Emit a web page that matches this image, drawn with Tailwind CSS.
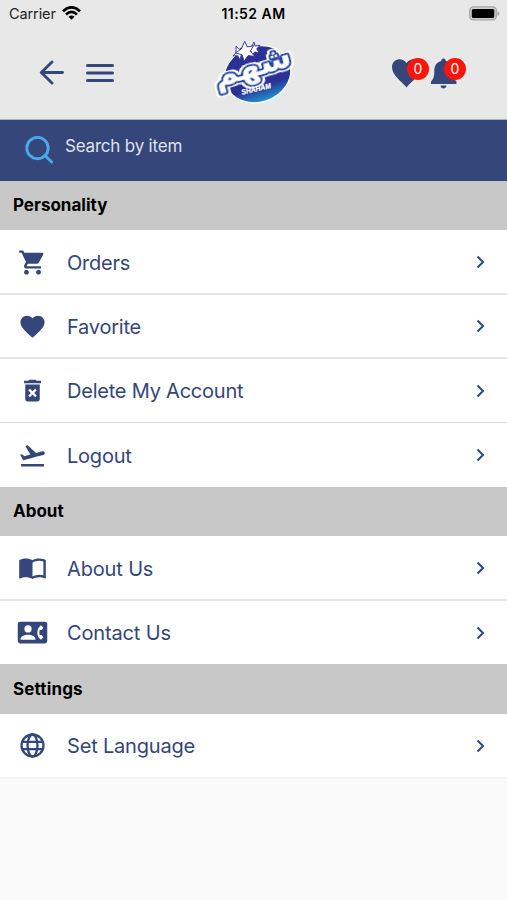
<!DOCTYPE html>
<html lang="en">
<head>
<meta charset="utf-8">
<title>Shaham</title>
<script src="https://cdn.jsdelivr.net/npm/@tailwindcss/browser@4"></script>
</head>
<body class="w-[507px] h-[900px] overflow-hidden bg-[#fafafa] font-['Inter','Liberation_Sans',sans-serif] text-[#34467a]">
<header class="h-[120px] bg-[#e8e8e8] border-b border-[#a9aec0]">
  <div class="h-[28px] grid grid-cols-3 items-center pl-[9px] pr-[7px] text-[#222]">
    <div class="flex items-center gap-[6px] text-[14.5px] tracking-[-0.1px]"><span>Carrier</span>
      <svg class="w-[19px] h-[14px] -mt-[2px]" viewBox="0 0 19 14" fill="none" stroke="#000" stroke-width="2.7"><path d="M1 5.2Q9.500-2.600 18 5.200M4 8.400Q9.500 3.500 15 8.400"/><path d="M6.500 10.700Q9.500 8.200 12.500 10.700L9.500 13.700Z" fill="#000" stroke="none"/></svg>
    </div>
    <div class="text-center -mt-px pr-[2px] text-[14px] tracking-[0.45px] font-semibold text-black whitespace-nowrap">11:52 AM</div>
    <svg class="w-[31px] h-[15px] justify-self-end -mt-[2px]" viewBox="0 0 31 15"><rect x=".8" y=".9" width="26.500" height="13" rx="3.500" fill="#d0d0d0" stroke="#a5a5a5" stroke-width="1.300"/><rect x="2.800" y="2.900" width="22.500" height="9" rx="1.500"/><path d="M28.500 5q2 1 2 2.500t-2 2.500z" fill="#a5a5a5"/></svg>
  </div>
  <div class="h-[89px] flex items-center pl-[39px]">
    <div class="w-[161px] flex items-center gap-[22px]">
      <svg class="w-[25px] h-[25px]" viewBox="0 0 25 25" fill="none" stroke="#34467a" stroke-width="2.900" stroke-linecap="round" stroke-linejoin="round"><path d="M13 2L2.300 12.500L13 23M2.500 12.500H23.500"/></svg>
      <svg class="w-[28px] h-[20px]" viewBox="0 0 28 20" fill="none" stroke="#34467a" stroke-width="3" stroke-linecap="round"><path d="M1.500 2.500H26.500M1.500 10H26.500M1.500 17.500H26.500"/></svg>
    </div>
    <svg class="w-[110px] h-[85px] shrink-0 overflow-visible" viewBox="0 0 330 255">
      <defs>
        <linearGradient id="ball" x1="0" y1="0" x2="0" y2="1"><stop offset=".72" stop-color="#2b2f96"/><stop offset="1" stop-color="#2196cf"/></linearGradient>
        <filter id="rim" x="-.2" y="-.3" width="1.400" height="1.600"><feMorphology in="SourceAlpha" operator="dilate" radius="4"/><feGaussianBlur stdDeviation=".8" result="d"/><feFlood flood-color="#fff"/><feComposite in2="d" operator="in" result="w"/><feMerge><feMergeNode in="w"/><feMergeNode in="w"/><feMergeNode in="SourceGraphic"/></feMerge></filter>
      </defs>
      <g transform="rotate(-18 174 130)"><ellipse cx="172" cy="132" rx="101" ry="84" fill="url(#ball)" stroke="#f5fafc" stroke-width="4"/></g>
      <g fill="#fff" stroke="#3439a0" stroke-width="3">
        <path d="M108 49l10 9 11-7-2 13 12 8-15 3-4 14-7-12-14 1 9-10z"/>
        <path d="M162 36l3 12 15-2-10 11 8 11-14-2-8 11-3-14-13-6 14-5z"/>
        <path d="M134 34l8 17 19-4-10 16 13 16-20-2-12 17-6-20-20-5 18-12z"/>
      </g>
      <g transform="translate(165 139) rotate(-16) scale(1.300 1)" filter="url(#rim)">
        <text text-anchor="middle" font-family="DejaVu Sans, sans-serif" font-weight="700" font-size="92" textLength="184" lengthAdjust="spacingAndGlyphs" fill="#fff" stroke="#1f4aa2" stroke-width="13" stroke-linejoin="round" paint-order="stroke">شهم</text>
      </g>
      <text transform="translate(126 194) rotate(-13)" font-family="Liberation Sans, sans-serif" font-size="22" font-weight="700" font-style="italic" fill="#fff" stroke="#fff" stroke-width=".8" textLength="90" lengthAdjust="spacingAndGlyphs">SHAHAM</text>
    </svg>
    <div class="ml-[81px] w-[77px] flex items-center">
      <div class="relative w-[39px] h-[34px]">
        <svg class="w-[31px] h-[34px]" viewBox="0 0 31 34" fill="#34467a"><path d="M15.500 31.500C11 26 1 19 1 11.500C1 2.500 11 .8 15.500 7C20 .8 30 2.500 30 11.500C30 19 20 26 15.500 31.500Z"/></svg>
        <span class="absolute left-[16px] top-[2px] size-[22px] rounded-full bg-[#fb140a] text-white text-[14px] flex items-center justify-center">0</span>
      </div>
      <div class="relative w-[38px] h-[34px]">
        <svg class="w-[27px] h-[34px]" viewBox="0 0 27 34" fill="#34467a"><path d="M13.500 2.500c1.600 0 2.200 1.200 2.200 2.600 4.700 1 7.300 4.500 7.300 10 0 7 1.500 8.500 3.500 10.400v2.500H1v-2.500c2-1.900 3.300-3.400 3.300-10.400 0-5.500 2.500-9 7-10 0-1.400.6-2.600 2.200-2.600zM10.500 29.500h6q-.5 3-3 3t-3-3z"/></svg>
        <span class="absolute left-[14px] top-[2px] size-[22px] rounded-full bg-[#fb140a] text-white text-[14px] flex items-center justify-center">0</span>
      </div>
    </div>
  </div>
</header>
<div class="h-[61px] bg-[#34467a] flex items-start pl-[25px] gap-[12px] text-[#dfe2ec]">
  <svg class="w-[28px] h-[28px] mt-[16px]" viewBox="0 0 28 28" fill="none" stroke="#4aa9e9" stroke-width="2.900" stroke-linecap="round"><circle cx="12.500" cy="12" r="10.700"/><path d="M20 19.500L26.500 26"/></svg>
  <span class="mt-[14px] text-[17px] leading-[24px] tracking-[-0.2px]">Search by item</span>
</div>
<h2 class="h-[49px] bg-[#c8c8c8] flex items-center pl-[13px] pt-px text-[17px] font-bold text-black"><span>Personality</span></h2>
<ul class="bg-white text-[20px] tracking-[-0.22px]">
  <li class="h-[64.500px] border-b-2 border-[#e4e4e4] flex items-center pt-[2px] pl-[18px] pr-[17px]"><svg class="size-[29px]" viewBox="0 0 24 24" fill="#34467a"><path d="M7 18c-1.100 0-1.990.9-1.990 2S5.900 22 7 22s2-.9 2-2-.9-2-2-2zM1 2v2h2l3.600 7.590-1.350 2.450c-.16.28-.25.61-.25.96 0 1.100.9 2 2 2h12v-2H7.420c-.14 0-.25-.11-.25-.25l.03-.12.9-1.630h7.450c.75 0 1.410-.41 1.750-1.030l3.580-6.490A1 1 0 0020 4H5.210l-.94-2H1zm16 16c-1.100 0-1.990.9-1.990 2s.89 2 1.990 2 2-.9 2-2-.9-2-2-2z"/></svg><span class="ml-[20px] pt-px flex-1">Orders</span><svg class="size-[20px]" viewBox="0 0 20 20" fill="none" stroke="#34467a" stroke-width="2"><path d="M7.500 4.500L13 10L7.500 15.500"/></svg></li>
  <li class="h-[64.500px] border-b-2 border-[#e4e4e4] flex items-center pt-[1px] pl-[18px] pr-[17px]"><svg class="size-[29px]" viewBox="0 0 24 24" fill="#34467a"><path d="M12 21.350l-1.450-1.320C5.400 15.360 2 12.280 2 8.500 2 5.420 4.420 3 7.500 3c1.740 0 3.410.81 4.500 2.090C13.090 3.810 14.760 3 16.500 3 19.580 3 22 5.420 22 8.500c0 3.780-3.400 6.860-8.550 11.540L12 21.350z"/></svg><span class="ml-[20px] pt-px flex-1">Favorite</span><svg class="size-[20px]" viewBox="0 0 20 20" fill="none" stroke="#34467a" stroke-width="2"><path d="M7.500 4.500L13 10L7.500 15.500"/></svg></li>
  <li class="h-[64px] border-b border-[#d4d4d4] flex items-center pl-[18px] pr-[17px]"><svg class="size-[29px]" viewBox="0 0 24 24" fill="#34467a"><path d="M6 19c0 1.100.9 2 2 2h8c1.100 0 2-.9 2-2V7H6v12zm2.460-7.120l1.410-1.410L12 12.590l2.120-2.120 1.410 1.410L13.410 14l2.120 2.120-1.410 1.410L12 15.410l-2.120 2.120-1.410-1.410L10.590 14l-2.130-2.120zM15.500 4l-1-1h-5l-1 1H5v2h14V4z"/></svg><span class="ml-[20px] pt-px flex-1">Delete My Account</span><svg class="size-[20px]" viewBox="0 0 20 20" fill="none" stroke="#34467a" stroke-width="2"><path d="M7.500 4.500L13 10L7.500 15.500"/></svg></li>
  <li class="h-[64px] flex items-center pl-[18px] pr-[17px]"><svg class="size-[29px]" viewBox="0 0 24 24" fill="#34467a"><path d="M2.500 19h19v2h-19zm19.570-9.360c-.21-.8-1.040-1.280-1.840-1.060L14.920 10l-6.900-6.430-1.930.51 4.140 7.170-4.970 1.330-1.970-1.540-1.450.39 1.820 3.160.77 1.330 1.600-.43 5.310-1.420 4.350-1.160L21 11.490c.81-.23 1.280-1.050 1.070-1.850z"/></svg><span class="ml-[20px] pt-px flex-1">Logout</span><svg class="size-[20px]" viewBox="0 0 20 20" fill="none" stroke="#34467a" stroke-width="2"><path d="M7.500 4.500L13 10L7.500 15.500"/></svg></li>
</ul>
<h2 class="h-[49px] bg-[#c8c8c8] flex items-center pl-[13px] pt-px text-[17px] font-bold text-black"><span>About</span></h2>
<ul class="bg-white text-[20px] tracking-[-0.15px]">
  <li class="h-[65px] border-b-2 border-[#e4e4e4] flex items-center pl-[18px] pr-[17px]"><svg class="size-[29px]" viewBox="0 0 24 24" fill="#34467a"><path d="M21 5c-1.110-.35-2.330-.5-3.500-.5-1.950 0-4.050.4-5.500 1.500-1.450-1.100-3.550-1.500-5.500-1.500S2.450 4.900 1 6v14.650c0 .25.250.5.500.5.100 0 .150-.05.250-.05C3.100 20.450 5.050 20 6.500 20c1.950 0 4.050.4 5.500 1.500 1.350-.85 3.800-1.500 5.500-1.500 1.650 0 3.350.3 4.750 1.050.1.050.150.050.250.050.250 0 .5-.250.5-.5V6c-.6-.450-1.250-.750-2-1zm0 13.500c-1.100-.350-2.300-.5-3.500-.5-1.700 0-4.150.650-5.500 1.500V8c1.350-.850 3.800-1.500 5.500-1.500 1.200 0 2.400.150 3.500.5v11.500z"/></svg><span class="ml-[20px] pt-[2px] flex-1">About Us</span><svg class="size-[20px]" viewBox="0 0 20 20" fill="none" stroke="#34467a" stroke-width="2"><path d="M7.500 4.500L13 10L7.500 15.500"/></svg></li>
  <li class="h-[63px] flex items-center pl-[18px] pr-[17px]"><svg class="size-[29px] overflow-visible" viewBox="0 0 24 24"><rect x="-.2" y="3" width="24.400" height="18" rx="2" fill="#34467a"/><g fill="#fff"><circle cx="8.300" cy="9" r="3"/><path d="M2.200 18v-1c0-2 4-3.100 6.100-3.100s6.100 1.100 6.100 3.100v1zM18 14h1.500L21 16l-2 2c-1.300-.98-2.280-2.400-2.730-4A7 7 0 0116 12c0-.690.100-1.360.270-2 .450-1.610 1.420-3.020 2.730-4l2 2-1.500 2H18c-.220.630-.350 1.300-.350 2s.130 1.370.350 2z"/></g></svg><span class="ml-[20px] pt-px flex-1">Contact Us</span><svg class="size-[20px]" viewBox="0 0 20 20" fill="none" stroke="#34467a" stroke-width="2"><path d="M7.500 4.500L13 10L7.500 15.500"/></svg></li>
</ul>
<h2 class="h-[50px] bg-[#c8c8c8] flex items-center pl-[13px] pt-px text-[17px] font-bold tracking-[0.15px] text-black"><span>Settings</span></h2>
<ul class="bg-white text-[20px] tracking-[-0.18px]">
  <li class="h-[65px] border-b-2 border-[#f1f1f1] flex items-center pl-[18px] pr-[17px]"><svg class="size-[29px]" viewBox="0 0 24 24" fill="none" stroke="#34467a" stroke-width="1.900"><circle cx="12" cy="12" r="9.100"/><ellipse cx="12" cy="12" rx="4.100" ry="9.100"/><path d="M3.500 9h17M3.500 15h17"/></svg><span class="ml-[20px] pt-px flex-1">Set Language</span><svg class="size-[20px]" viewBox="0 0 20 20" fill="none" stroke="#34467a" stroke-width="2"><path d="M7.500 4.500L13 10L7.500 15.500"/></svg></li>
</ul>
</body>
</html>
